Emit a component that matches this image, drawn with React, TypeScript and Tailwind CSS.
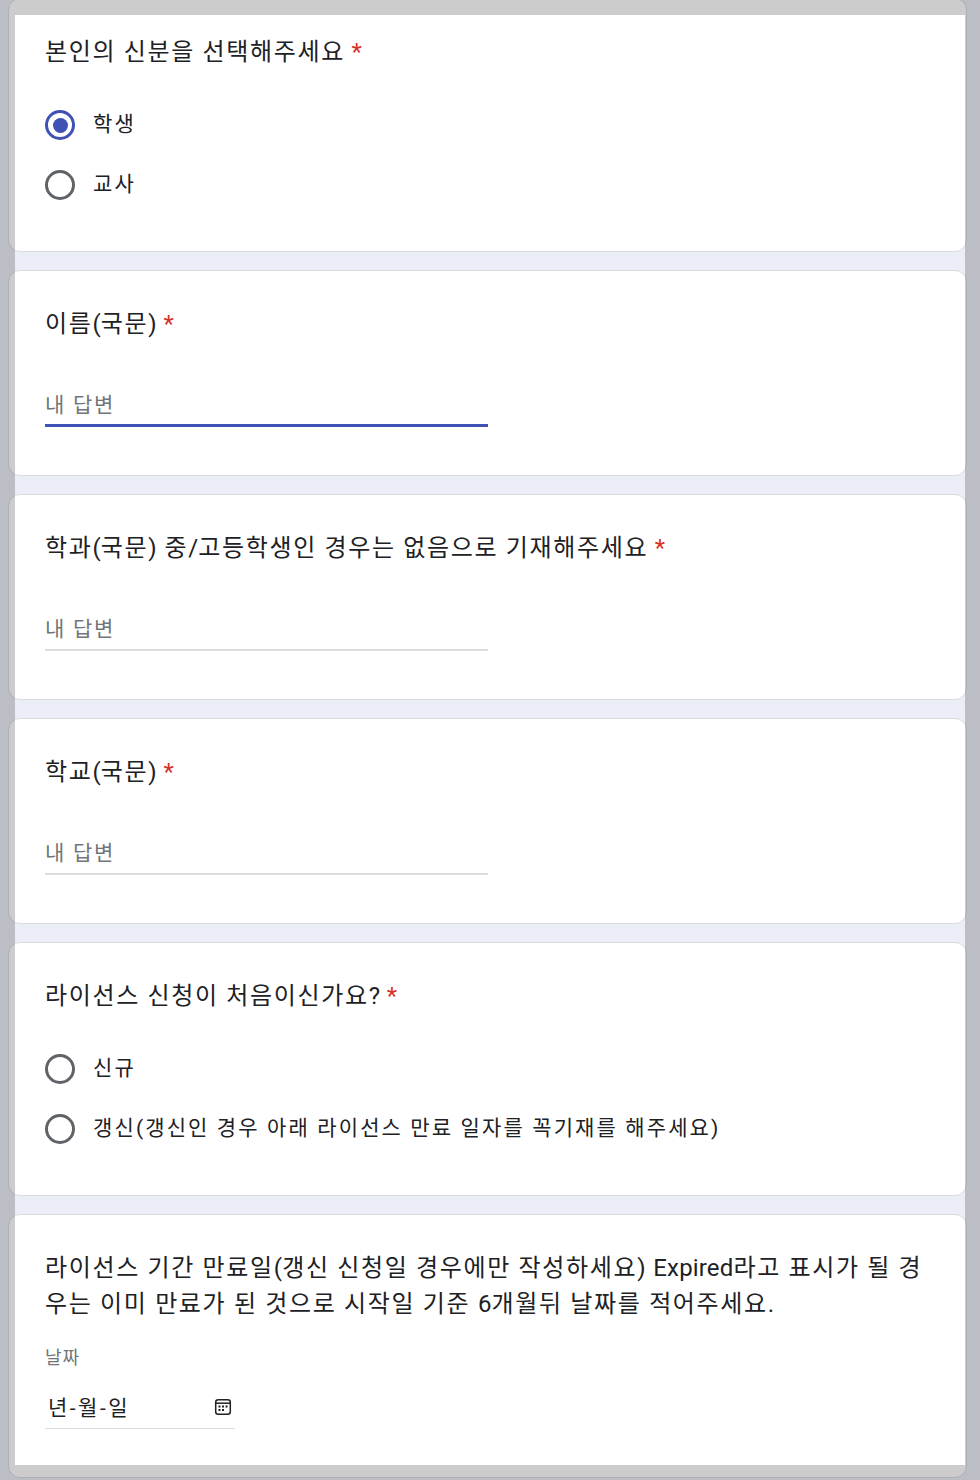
import React from "react";

const FONT = "[font-family:Roboto,'Noto_Sans_CJK_KR',sans-serif]";

function Card({ className = "", children }: { className?: string; children: React.ReactNode }) {
  return (
    <section className={`ml-[8px] w-[959px] rounded-[12px] border border-[#dadce0] bg-white pl-[36px] pr-[35px] pt-[35px] ${className}`}>
      {children}
    </section>
  );
}

function Mixed({ text }: { text: string }) {
  const parts = text.split(/([()\/A-Za-z0-9.?]+)/);
  return (
    <>
      {parts.map((p, i) =>
        i % 2 === 1 ? (
          <span key={i} className="tracking-[0.15px]">
            {p}
          </span>
        ) : (
          <React.Fragment key={i}>{p}</React.Fragment>
        )
      )}
    </>
  );
}

function Title({ text }: { text: string }) {
  return (
    <h2 className="text-[24px] leading-[36px] tracking-[1.65px] text-[#202124]">
      <Mixed text={text} /> <span className="-ml-[1px] text-[#d93025]">*</span>
    </h2>
  );
}

function Radio({ label, checked = false }: { label: string; checked?: boolean }) {
  return (
    <div className="flex h-[60px] items-center gap-[18px]">
      <span
        className={`flex h-[30px] w-[30px] shrink-0 items-center justify-center rounded-full border-[3px] ${
          checked ? "border-[#3f51b5]" : "border-[#5f6368]"
        }`}
      >
        {checked && <span className="h-[15px] w-[15px] rounded-full bg-[#3f51b5]" />}
      </span>
      <span className="-mt-[3px] text-[21px] leading-[30px] tracking-[2.12px] text-[#202124]">{label}</span>
    </div>
  );
}

function TextAnswer({ focused = false }: { focused?: boolean }) {
  return (
    <div className="mt-[45px] w-[443px]">
      <input
        placeholder="내 답변"
        readOnly
        className="block h-[36px] w-full bg-transparent text-[21px] tracking-[1.7px] text-[#202124] outline-none placeholder:text-[#70757a]"
      />
      <div className={focused ? "mt-[1px] h-[3px] bg-[#3f51b5]" : "mt-[2px] h-[2px] bg-[#dadce0]"} />
    </div>
  );
}

function CalendarIcon() {
  return (
    <svg width="18" height="18" viewBox="0 0 18 18" fill="none" aria-hidden="true" className="-mt-[2px]">
      <rect x="1.7" y="1.7" width="14.6" height="14.6" rx="2.5" stroke="#202124" strokeWidth="1.5" />
      <path d="M1.7 5.2h14.6" stroke="#202124" strokeWidth="1.5" />
      <g fill="#202124">
        <rect x="4.5" y="7.5" width="2" height="2" />
        <rect x="8" y="7.5" width="2" height="2" />
        <rect x="11.5" y="7.5" width="2" height="2" />
        <rect x="4.5" y="11" width="2" height="2" />
        <rect x="8" y="11" width="2" height="2" />
      </g>
    </svg>
  );
}

export default function App() {
  return (
    <div className={`relative h-[1480px] overflow-hidden bg-[#ebeef7] ${FONT}`}>
      <div className="-mt-[2px] flex flex-col gap-[18px]">
        <Card className="h-[254px]">
          <Title text="본인의 신분을 선택해주세요" />
          <div className="mt-[25px]">
            <Radio label="학생" checked />
            <Radio label="교사" />
          </div>
        </Card>
        <Card className="h-[206px]">
          <Title text="이름(국문)" />
          <TextAnswer focused />
        </Card>
        <Card className="h-[206px]">
          <Title text="학과(국문) 중/고등학생인 경우는 없음으로 기재해주세요" />
          <TextAnswer />
        </Card>
        <Card className="h-[206px]">
          <Title text="학교(국문)" />
          <TextAnswer />
        </Card>
        <Card className="h-[254px]">
          <Title text="라이선스 신청이 처음이신가요?" />
          <div className="mt-[25px]">
            <Radio label="신규" />
            <Radio label="갱신(갱신인 경우 아래 라이선스 만료 일자를 꼭기재를 해주세요)" />
          </div>
        </Card>
        <Card className="h-[264px]">
          <h2 className="text-[24px] leading-[36px] tracking-[1.65px] text-[#202124]">
            <Mixed text="라이선스 기간 만료일(갱신 신청일 경우에만 작성하세요) Expired라고 표시가 될 경우는 이미 만료가 된 것으로 시작일 기준 6개월뒤 날짜를 적어주세요." />
          </h2>
          <div className="mt-[24px] text-[18px] leading-[24px] tracking-[1px] text-[#70757a]">날짜</div>
          <div className="mt-[17px] flex h-[42px] w-[190px] items-center justify-between border-b border-[#dadce0] pl-[3px] pr-[3px] text-[21px] tracking-[2.5px] text-[#202124]">
            <span className="mt-[2px]">년-월-일</span>
            <CalendarIcon />
          </div>
        </Card>
      </div>
      <div className="pointer-events-none absolute inset-0 border-[15px] border-black/20" />
    </div>
  );
}
